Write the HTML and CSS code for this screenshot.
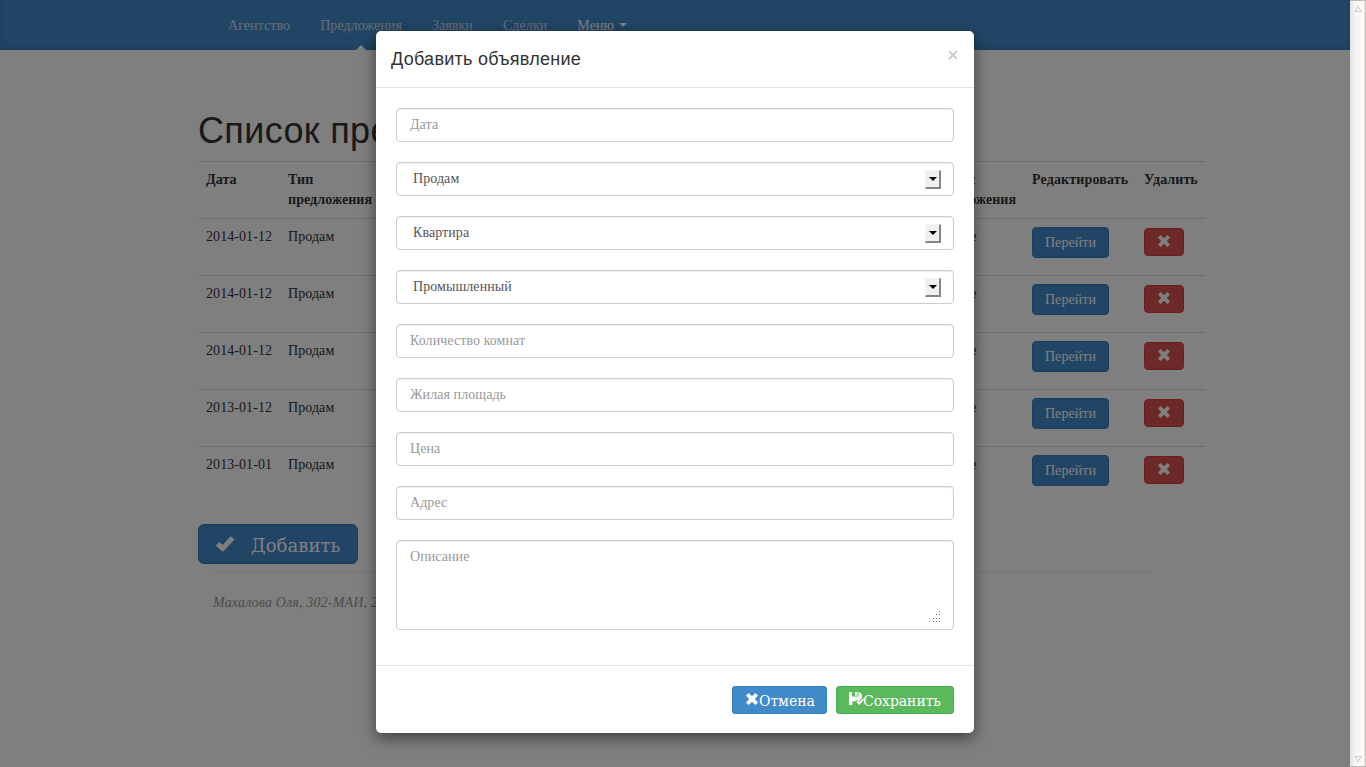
FILE: index.html
```html
<!DOCTYPE html>
<html lang="ru">
<head>
<meta charset="utf-8">
<title>Список предложений</title>
<link rel="stylesheet" href="styles.css">
</head>
<body>
<svg width="0" height="0" class="defs">
  <symbol id="remove" viewBox="0 0 14 14"><path d="M3.6 1 L7 4.2 L10.4 1 L13 3.6 L9.8 7 L13 10.4 L10.4 13 L7 9.8 L3.6 13 L1 10.4 L4.2 7 L1 3.6Z"/></symbol>
  <symbol id="ok" viewBox="0 0 18 16"><path d="M0 9.2 L3 6.3 Q3.4 6 3.8 6.4 L6.6 9 L14.4 0.6 Q14.8 0.2 15.2 0.6 L18 3.2 Q18.3 3.6 18 4 L7.2 15.4 Q6.7 15.8 6.2 15.4 L0.1 9.9Z"/></symbol>
  <symbol id="saved" viewBox="0 0 15 13"><path d="M0 0H3V4.5H9.5V0H10.5L13 2.5V6L9.8 9.3L8.2 7.7L6.5 9.3H3.4V13H0Z"/><path d="M6 0H8.5V3.6H6Z"/><path d="M7.3 9.9 L8.7 8.5 L10.4 10.1 L14 6.5 L15 7.6 L10.4 12.9Z"/></symbol>
</svg>
<div class="window">
  <div class="page">
    <nav class="navbar">
      <a class="nav-item">Агентство</a>
      <a class="nav-item active">Предложения</a>
      <a class="nav-item">Заявки</a>
      <a class="nav-item">Сделки</a>
      <a class="nav-item menu">Меню<span class="caret"></span></a>
    </nav>
    <main class="container">
      <h1>Список предложений</h1>
      <table class="offers">
        <colgroup><col class="c-date"><col class="c-type"><col class="c-rest"><col class="c-status"><col class="c-edit"><col class="c-del"></colgroup>
        <tr><th>Дата</th><th>Тип предложения</th><th></th><th>Статус предложения</th><th>Редактировать</th><th>Удалить</th></tr>
        <tr><td>2014-01-12</td><td>Продам</td><td></td><td>Первое</td><td><a class="btn go">Перейти</a></td><td><a class="btn del"><svg><use href="#remove"/></svg></a></td></tr>
        <tr><td>2014-01-12</td><td>Продам</td><td></td><td>Первое</td><td><a class="btn go">Перейти</a></td><td><a class="btn del"><svg><use href="#remove"/></svg></a></td></tr>
        <tr><td>2014-01-12</td><td>Продам</td><td></td><td>Первое</td><td><a class="btn go">Перейти</a></td><td><a class="btn del"><svg><use href="#remove"/></svg></a></td></tr>
        <tr><td>2013-01-12</td><td>Продам</td><td></td><td>Первое</td><td><a class="btn go">Перейти</a></td><td><a class="btn del"><svg><use href="#remove"/></svg></a></td></tr>
        <tr><td>2013-01-01</td><td>Продам</td><td></td><td>Первое</td><td><a class="btn go">Перейти</a></td><td><a class="btn del"><svg><use href="#remove"/></svg></a></td></tr>
      </table>
      <a class="btn add"><svg><use href="#ok"/></svg><span>Добавить</span></a>
      <footer class="footer">Махалова Оля, 302-МАИ, 2014</footer>
    </main>
    <div class="backdrop">
      <div class="modal">
        <header class="modal-header"><h4>Добавить объявление</h4><svg class="close" viewBox="0 0 10 10"><path d="M1 1L9 9M9 1L1 9"/></svg></header>
        <form class="modal-body">
          <div class="field">Дата</div>
          <div class="field select"><span>Продам</span><i class="drop"></i></div>
          <div class="field select"><span>Квартира</span><i class="drop"></i></div>
          <div class="field select"><span>Промышленный</span><i class="drop"></i></div>
          <div class="field">Количество комнат</div>
          <div class="field">Жилая площадь</div>
          <div class="field">Цена</div>
          <div class="field">Адрес</div>
          <div class="field area"><span>Описание</span><svg class="grip" viewBox="0 0 12 12"><path d="M11 0h1v1h-1zM8 3h1v1h-1zM11 3h1v1h-1zM5 7h1v1h-1zM8 7h1v1h-1zM11 7h1v1h-1zM1 10h1v1h-1zM5 10h1v1h-1zM8 10h1v1h-1zM11 10h1v1h-1z"/></svg></div>
        </form>
        <footer class="modal-footer">
          <a class="btn cancel"><svg><use href="#remove"/></svg><span>Отмена</span></a>
          <a class="btn save"><svg><use href="#saved"/></svg><span>Сохранить</span></a>
        </footer>
      </div>
    </div>
  </div>
  <div class="scrollbar">
    <svg viewBox="0 0 8 6"><path d="M1 5.5L4 .5L7 5.5Z"/></svg>
    <svg viewBox="0 0 8 6"><path d="M1 .5H7L4 5.5Z"/></svg>
  </div>
</div>
</body>
</html>
```
FILE: styles.css
```css
* { box-sizing: border-box; }
body { margin: 0; overflow: hidden; font: 14px/20px "Liberation Serif", serif; letter-spacing: .07px; color: #333; background: #fff; }
.defs { position: absolute; }
svg { fill: currentColor; display: block; }
.window { display: flex; height: 767px; }
.page { position: relative; width: 1350px; overflow: hidden; }
.navbar { display: flex; height: 50px; padding-left: 213px; background: #428bca; box-shadow: inset 0 -2px 5px rgba(0,0,0,.1); }
.nav-item { position: relative; padding: 16px 15px 14px; color: #cdddeb; }
.menu { color: #fff; }
.active::after { content: ""; position: absolute; left: 50%; bottom: 0; margin-left: -5px; border: 5px solid transparent; border-top: 0; border-bottom-color: #fff; }
.caret { display: inline-block; margin-left: 5px; vertical-align: 3px; border: 4px solid transparent; border-top-color: currentColor; border-bottom: 0; }
.container { width: 1000px; margin-left: 183px; padding: 0 15px; }
h1 { margin: 61px 0 10px; font: 36px/40px "Liberation Sans", sans-serif; letter-spacing: .35px; white-space: nowrap; }
.offers { width: 1007px; table-layout: fixed; border-collapse: separate; border-spacing: 0; margin-bottom: 21px; }
.offers th, .offers td { height: 57px; padding: 8px; text-align: left; vertical-align: top; border-top: 1px solid #ddd; }
.offers td { white-space: nowrap; }
.offers td:nth-child(4) { letter-spacing: .25px; }
.offers th:nth-child(5) { letter-spacing: .15px; }
.c-date { width: 82px; }
.c-type { width: 100px; }
.c-status { width: 100px; }
.c-edit { width: 112px; }
.c-del { width: 69px; }
.btn { display: inline-flex; align-items: center; color: #fff; border: 1px solid #357ebd; border-radius: 4px; background: #428bca; }
.go { height: 31px; width: 77px; justify-content: center; }
.del { width: 40px; height: 28px; margin-top: 1px; padding: 0 0 2px; justify-content: center; background: #d9534f; border-color: #d43f3a; }
.del svg, .cancel svg { width: 14px; height: 14px; }
.add { width: 160px; height: 40px; padding-left: 17px; border-radius: 6px; font: 18px/24px "DejaVu Serif", serif; }
.add svg { width: 18px; height: 16px; margin-right: 17px; }
.container > .add { display: flex; }
.footer { width: 940px; margin: 8px 15px 0; padding-top: 20px; border-top: 1px solid #eee; color: #999; font-style: italic; letter-spacing: .17px; white-space: nowrap; }
.backdrop { position: absolute; inset: 0; padding-top: 31px; background: rgba(0,0,0,.5); }
.modal { width: 598px; height: 702px; margin-left: 376px; background: #fff; border-radius: 5px; box-shadow: 0 5px 15px rgba(0,0,0,.5); }
.modal-header { display: flex; justify-content: space-between; height: 57px; padding: 15px 16px 0 15px; border-bottom: 1px solid #e5e5e5; }
h4 { margin: 0; font: 18px/27px "Liberation Sans", sans-serif; letter-spacing: .27px; }
.close { width: 10px; height: 10px; margin-top: 4px; stroke: #ccc; stroke-width: 1.8; fill: none; }
.modal-body { display: flex; flex-direction: column; gap: 20px; height: 577px; padding: 20px; }
.field { height: 34px; padding: 6px 13px; border: 1px solid #ccc; border-radius: 4px; color: #999; line-height: 20px; box-shadow: inset 0 1px 1px rgba(0,0,0,.075); }
.select { display: flex; justify-content: space-between; padding-left: 16px; padding-right: 12px; color: #555; }
.drop { display: flex; align-items: center; justify-content: center; width: 16px; height: 19px; margin-top: 1px; background: #f0f0f0; border: 1px solid #f5f5f5; border-right: 2px solid #858585; border-bottom: 2px solid #858585; }
.drop::after { content: ""; border: 4px solid transparent; border-top: 4px solid #000; border-bottom: 0; }
.area { display: flex; justify-content: space-between; height: 90px; }
.grip { align-self: flex-end; width: 12px; height: 12px; fill: #777; }
.modal-footer { display: flex; justify-content: flex-end; gap: 9px; padding: 20px; border-top: 1px solid #e5e5e5; }
.modal-footer .btn { height: 28px; padding-left: 12px; font: 14px/22px "DejaVu Serif", serif; letter-spacing: -.05px; border-radius: 3px; }
.modal-footer svg { margin-top: -3px; }
.modal-footer span, .add span { white-space: nowrap; padding-top: 2px; }
.add span { padding-top: 3px; }
.cancel { width: 95px; }
.modal-footer .save { width: 118px; background: #5cb85c; border-color: #4cae4c; }
.save svg { width: 15px; height: 13px; margin-right: -1px; }
.scrollbar { display: flex; flex-direction: column; align-items: center; justify-content: space-between; width: 16px; padding: 5px 0 4px; background: linear-gradient(90deg, #e3e3e3, #f3f3f3 30%, #fbfbfb 85%, #bbb7b2); border: solid #bdb8b2; border-width: 1px 0; }
.scrollbar svg { width: 8px; height: 6px; fill: none; stroke: #ccc; }
```
